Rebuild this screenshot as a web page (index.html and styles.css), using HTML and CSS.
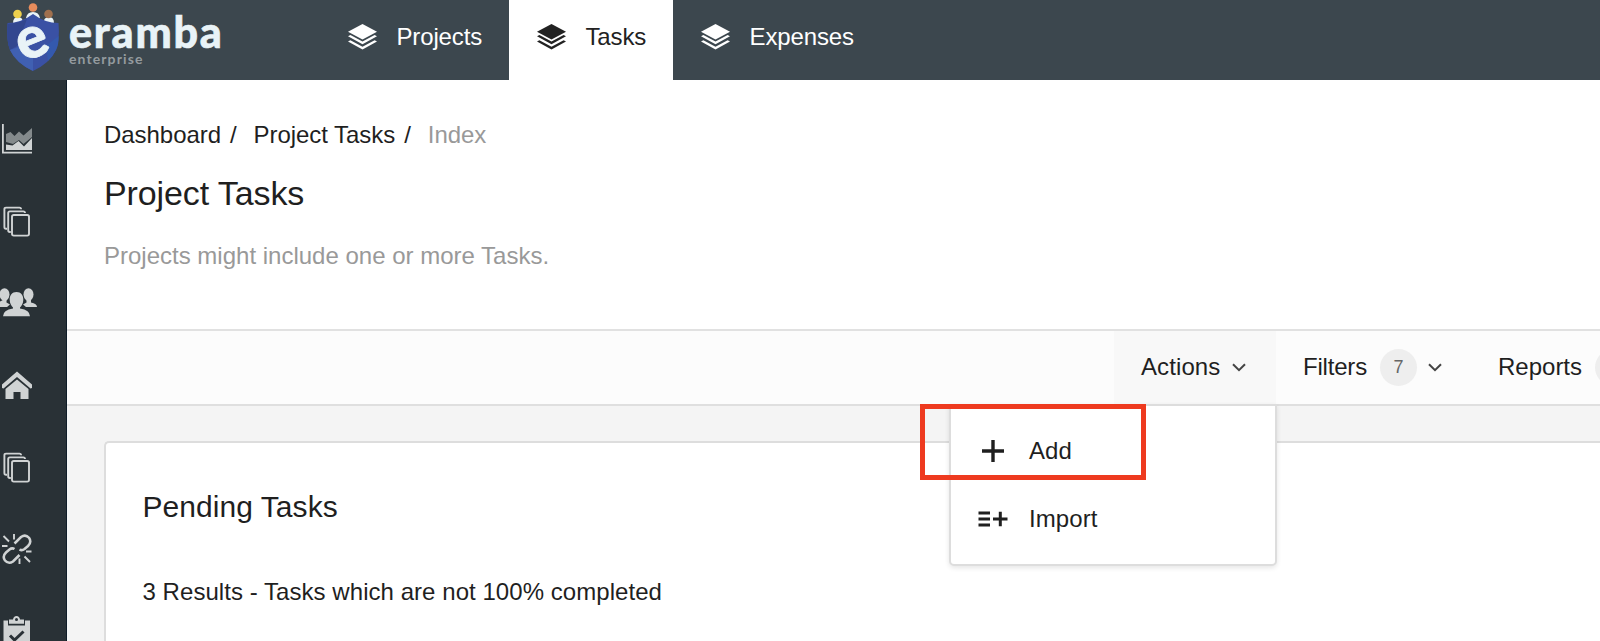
FILE: index.html
```html
<!DOCTYPE html>
<html lang="en">
<head>
    <meta charset="UTF-8">
    <meta name="viewport" content="width=device-width, initial-scale=1.0">
    <title>Project Tasks - eramba</title>
    <link rel="stylesheet" href="styles.css">
</head>
<body>
    <svg class="sprite" width="0" height="0">
        <symbol id="icon-layers" viewBox="0 0 29 26">
            <path d="M14.5 0 29 7.8 14.5 15.4 0 7.8z"/>
            <path d="M0 12.2 2.4 11 14.5 17.4 26.6 11 29 12.2 14.5 20.2z"/>
            <path d="M0 17.6 2.4 16.3 14.5 22.7 26.6 16.3 29 17.6 14.5 25.6z"/>
        </symbol>
        <symbol id="icon-copy" viewBox="0 0 30 32">
            <g fill="none" stroke="currentColor" stroke-width="1.9">
                <path d="M5 23.8H4Q2.4 23.8 2.4 22V4.3Q2.4 2.600 4 2.600H17.400Q19.100 2.600 19.100 4.300"/>
                <path d="M8.800 27H7.800Q6.200 27 6.200 25.300V8.100Q6.200 6.400 7.800 6.400H21.300Q23 6.400 23 8.100"/>
                <rect x="10" y="10" width="17" height="20.600" rx="1.800"/>
            </g>
        </symbol>
        <symbol id="icon-chevron" viewBox="0 0 14 9">
            <path d="M1 1.2 7 7.2 13 1.2" fill="none" stroke="currentColor" stroke-width="2"/>
        </symbol>
    </svg>

    <header class="topbar">
        <div class="logo">
            <svg class="shield" width="54" height="70" viewBox="0 0 54 70">
                <path d="M6 23Q6 17 11 17Q16 17 16 23zM19 18Q20 12 26 12Q32 12 33 18L26 23zM36 23Q37 17 42 17Q47 17 47 23z" fill="#e9f3f7"/>
                <circle cx="10.5" cy="14" r="4.3" fill="#edd04c"/>
                <circle cx="26" cy="7.5" r="4.3" fill="#e78c5c"/>
                <circle cx="41.5" cy="14" r="4.3" fill="#a0704e"/>
                <path d="M26 14Q14 23 .5 23Q-1 40 3 50Q9 63 26 71Q43 63 49 50Q53 40 51.5 23Q38 23 26 14z" fill="#3a51a4"/>
                <path d="M.5 24Q12 23 20 19L10 46 3 50Q-1 40 .5 24z" fill="#32478f"/>
                <path d="M3 50 14 46 26 57V71Q9 63 3 50z" fill="#4060b2"/>
                <path d="M39 46 51.5 36Q52 44 49 50Q46 56 41 61z" fill="#3459ad"/>
                <text class="shield-letter" x="-15.5" y="15.5" transform="translate(25 42) rotate(-22)">e</text>
            </svg>
            <div class="logo-text">
                <span class="logo-name">eramba</span>
                <span class="logo-edition">enterprise</span>
            </div>
        </div>
        <nav class="tabs">
            <a class="tab"><svg class="tab-icon"><use href="#icon-layers"/></svg><span>Projects</span></a>
            <a class="tab active"><svg class="tab-icon"><use href="#icon-layers"/></svg><span>Tasks</span></a>
            <a class="tab"><svg class="tab-icon"><use href="#icon-layers"/></svg><span>Expenses</span></a>
        </nav>
    </header>

    <div class="layout">
        <aside class="sidebar">
            <svg viewBox="0 0 30 32">
                <path d="M0 1H1.8V28.8H30V30.500H0z"/>
                <path d="M4 11 8.500 9 12.500 13 17 8.500 21.500 12.500 30 5V14L21.500 21 17 17 11 21 4 19z" opacity=".55"/>
                <path d="M4 21.500 10.500 22.500 16.500 18 22 23.500 30 15V27H4z"/>
            </svg>
            <svg viewBox="0 0 30 32"><use href="#icon-copy"/></svg>
            <svg class="wide" viewBox="0 0 38 32">
                <ellipse cx="4.500" cy="7.500" rx="5" ry="6.300"/>
                <ellipse cx="28.500" cy="7.500" rx="5" ry="6.300"/>
                <path d="M0 20V14.500L3 13H6.500V15.500L10 17.500 7 20zM26.500 12.500H31V15.500Q37 16.500 37 20H26L23 17.500 26.500 15.500z"/>
                <path d="M16.500 5C21 5 23.500 8.500 23.300 13C23.200 16.500 21.500 19 20 20.500V21.500Q30 23 30 29.300H3Q3 23 13 21.500V20.500C11.500 19 9.800 16.500 9.700 13C9.500 8.500 12 5 16.500 5z" stroke="#293136" stroke-width="1.200" paint-order="stroke"/>
            </svg>
            <svg viewBox="0 0 30 32">
                <path d="M15 2.500 30 15.500V19L28.500 19.500 15 8 1.500 19.500 0 19V15.500z"/>
                <path d="M15 10.500 26.500 20V30H18.500V23H11.500V30H3.500V20z"/>
            </svg>
            <svg viewBox="0 0 30 32"><use href="#icon-copy"/></svg>
            <svg viewBox="0 0 30 32">
                <g fill="none" stroke="currentColor" stroke-width="2.500">
                    <path d="M12.500 10.500 19 4Q23.500 .800 27 4.800Q30 9 26 13L22.500 16Q20 18 17.500 16.500"/>
                    <path d="M17.500 22 11 28.500Q6.500 31.500 3 27.500Q0 23.500 4 19.500L7.500 16.500Q10 14.500 12.500 16"/>
                    <path d="M1.500 3 7 8.500M12 1V6.500M0 13H5.500M24 18.500H29.500M17.500 25.500V31M22.500 23.500 28 29" stroke-width="1.900"/>
                </g>
            </svg>
            <svg viewBox="0 0 30 32">
                <path d="M1.500 5.500H6V10.500H23V5.500H28V34H1.500z"/>
                <path d="M7 4.500H11Q11.500 1 14.500 1Q17.500 1 18 4.500H22V8.700H7z"/>
                <circle cx="14.500" cy="4.500" r="1.500" fill="#293136"/>
                <path d="M8 20.500 12.500 25 21.500 16.500" fill="none" stroke="#293136" stroke-width="3"/>
            </svg>
        </aside>

        <main class="content">
            <section class="page-header">
                <div class="breadcrumb">
                    <a>Dashboard</a><span class="slash">/</span>
                    <a>Project Tasks</a><span class="slash">/</span>
                    <span class="current">Index</span>
                </div>
                <h1>Project Tasks</h1>
                <p>Projects might include one or more Tasks.</p>
            </section>

            <div class="toolbar">
                <div class="toolbar-item actions open">
                    <span>Actions</span>
                    <svg class="chevron"><use href="#icon-chevron"/></svg>
                    <div class="dropdown">
                        <a class="dropdown-item">
                            <svg width="30" height="24" viewBox="0 0 30 24"><path d="M15 1V23M4 12H26" fill="none" stroke="currentColor" stroke-width="3.4"/></svg>
                            <span>Add</span>
                        </a>
                        <a class="dropdown-item">
                            <svg width="30" height="24" viewBox="0 0 30 24"><path d="M.5 6H12M.5 12H12M.5 18H12M15 12H29.5M22.3 4.8V19.2" fill="none" stroke="currentColor" stroke-width="3"/></svg>
                            <span>Import</span>
                        </a>
                        <div class="highlight"></div>
                    </div>
                </div>
                <div class="toolbar-item filters">
                    <span>Filters</span>
                    <span class="badge">7</span>
                    <svg class="chevron"><use href="#icon-chevron"/></svg>
                </div>
                <div class="toolbar-item reports">
                    <span>Reports</span>
                    <span class="badge"></span>
                </div>
            </div>

            <section class="card">
                <h2>Pending Tasks</h2>
                <p>3 Results - Tasks which are not 100% completed</p>
            </section>
        </main>
    </div>
</body>
</html>
```
FILE: styles.css
```css
* {
    margin: 0;
    padding: 0;
    box-sizing: border-box;
}

body {
    height: 641px;
    overflow: hidden;
    font-family: "Liberation Sans", Arial, sans-serif;
    font-size: 24px;
    line-height: 28px;
    color: #1f1f1f;
    background: #f4f4f4;
    white-space: nowrap;
}

.sprite {
    position: absolute;
}

svg {
    display: block;
    flex: none;
    fill: currentColor;
}

/* Top bar */
.topbar {
    display: flex;
    height: 80px;
    background: #3c474e;
    color: #fff;
}

.logo {
    display: flex;
    width: 320px;
    padding-left: 7px;
}

.shield {
    overflow: visible;
}

.shield-letter {
    font-family: Lato, sans-serif;
    font-size: 58px;
    font-weight: 900;
    fill: #e9f3f7;
    stroke: #e9f3f7;
    stroke-width: 0.8px;
}

.logo-text {
    display: flex;
    flex-direction: column;
    padding: 10px 0 0 8px;
}

.logo-name {
    font-family: Lato, sans-serif;
    font-size: 43px;
    font-weight: 900;
    line-height: 44px;
    color: #e9f3f7;
    letter-spacing: 1.8px;
    -webkit-text-stroke: 0.6px #e9f3f7;
}

.logo-edition {
    font-family: Lato, sans-serif;
    font-size: 14px;
    font-weight: 700;
    line-height: 10px;
    color: #949b9f;
    letter-spacing: 1.1px;
}

.tabs {
    display: flex;
    letter-spacing: -0.15px;
}

.tab {
    display: flex;
    align-items: flex-start;
    padding: 23px 27px 0 27.5px;
}

.tab.active {
    background: #fff;
    color: #222;
}

.tab-icon {
    width: 29px;
    height: 26px;
    margin: 1px 20px 0 0;
}

/* Sidebar */
.layout {
    display: flex;
    height: 561px;
    overflow: hidden;
}

.sidebar {
    width: 67px;
    flex: none;
    display: flex;
    flex-direction: column;
    gap: 50px;
    padding: 43px 0 0 1.5px;
    background: #293136;
    border-right: 1px solid #0e1c28;
    color: #d0d3d4;
    overflow: hidden;
}

.sidebar svg {
    width: 30px;
    height: 32px;
}

.sidebar .wide {
    width: 38px;
    margin-left: -1.5px;
}

/* Page header */
.content {
    flex: 1;
    min-width: 0;
}

.page-header {
    height: 251px;
    padding: 41px 0 0 37px;
    background: #fff;
    border-bottom: 2px solid #e1e1e1;
}

.breadcrumb {
    display: flex;
    letter-spacing: -0.05px;
}

.slash {
    margin: 0 17px 0 9px;
}

.current,
.page-header p {
    color: #999;
}

h1 {
    margin-top: 24px;
    font-size: 34px;
    line-height: 40px;
    font-weight: 400;
    letter-spacing: -0.1px;
}

.page-header p {
    margin-top: 29px;
}

/* Toolbar */
.toolbar {
    display: flex;
    height: 75px;
    padding-left: 1047px;
    background: #fcfcfc;
    border-bottom: 2px solid #dfdfdf;
}

.toolbar-item {
    position: relative;
    display: flex;
    flex: none;
    align-items: center;
    padding: 0 28px 1px 27px;
}

.toolbar-item.open {
    background: #f8f8f8;
}

.actions {
    width: 162px;
    letter-spacing: 0.1px;
}

.filters {
    width: 195px;
    letter-spacing: -0.2px;
}

.chevron {
    width: 14px;
    height: 9px;
    margin-left: 12px;
    color: #444;
}

.badge {
    display: flex;
    align-items: center;
    justify-content: center;
    flex: none;
    width: 37px;
    height: 37px;
    margin-left: 13px;
    border-radius: 50%;
    background: #eee;
    color: #666;
    font-size: 18px;
}

.filters .chevron {
    margin-left: 11px;
}

.dropdown {
    position: absolute;
    top: 73px;
    right: -1px;
    width: 328px;
    height: 162px;
    padding-top: 31px;
    display: flex;
    flex-direction: column;
    gap: 40px;
    background: #fff;
    border: 2px solid #ddd;
    border-radius: 0 0 5px 5px;
    box-shadow: 0 2px 5px rgba(0, 0, 0, 0.1);
}

.dropdown-item {
    display: flex;
    align-items: center;
    gap: 21px;
    padding-left: 27px;
}

.highlight {
    position: absolute;
    top: -2px;
    left: -31px;
    width: 226px;
    height: 76px;
    border: 5px solid #ee3a1f;
}

/* Results card */
.card {
    height: 200px;
    margin: 35px 0 0 37px;
    padding: 44px 0 0 36.5px;
    background: #fff;
    border: 2px solid #ddd;
    border-right: 0;
    border-bottom: 0;
    border-top-left-radius: 5px;
}

h2 {
    font-size: 30px;
    line-height: 40px;
    font-weight: 400;
    letter-spacing: 0.05px;
}

.card p {
    margin-top: 51px;
    letter-spacing: 0.05px;
}
```
